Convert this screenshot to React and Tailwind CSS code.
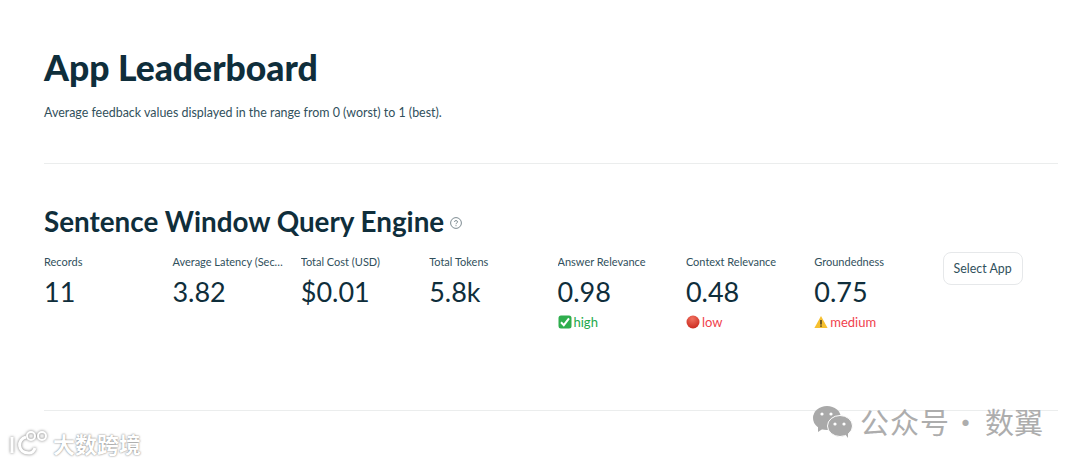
import React from "react";

const metrics = [
  { label: "Records", value: "11" },
  { label: "Average Latency (Seconds)", value: "3.82" },
  { label: "Total Cost (USD)", value: "$0.01" },
  { label: "Total Tokens", value: "5.8k" },
  { label: "Answer Relevance", value: "0.98", icon: "check", note: "high", noteClass: "text-[#21a84a]" },
  { label: "Context Relevance", value: "0.48", icon: "dot", note: "low", noteClass: "text-[#f0424c]" },
  { label: "Groundedness", value: "0.75", icon: "warn", note: "medium", noteClass: "text-[#f0424c]" },
];

const NoteIcon = ({ type }) => {
  if (type === "check") {
    return (
      <svg width="14" height="14" viewBox="0 0 14 14">
        <rect x="0.5" y="0.5" width="13" height="13" rx="2.5" fill="#2fae4e" />
        <path d="M3 7.2 L5.8 10.2 L11 3.4" fill="none" stroke="#fff" strokeWidth="2" />
      </svg>
    );
  }
  if (type === "dot") {
    return (
      <svg width="14" height="14" viewBox="0 0 14 14">
        <defs>
          <radialGradient id="redDot" cx="45%" cy="25%" r="80%">
            <stop offset="0%" stopColor="#f0705f" />
            <stop offset="100%" stopColor="#c9261b" />
          </radialGradient>
        </defs>
        <circle cx="7" cy="7" r="6.5" fill="url(#redDot)" />
      </svg>
    );
  }
  return (
    <svg width="14" height="14" viewBox="0 0 14 14">
      <path d="M7 1 L13.6 13 H0.4 Z" fill="#f6c030" strokeLinejoin="round" />
      <rect x="6.3" y="5" width="1.4" height="4.6" fill="#3a3320" />
      <rect x="6.3" y="10.4" width="1.4" height="1.4" fill="#3a3320" />
    </svg>
  );
};

const Metric = ({ label, value, icon, note, noteClass }) => (
  <div className="min-w-0">
    <div className="truncate pt-[2px] text-[11px] leading-[16px] text-[#31505c]">{label}</div>
    <div className="mt-[2px] text-[27px] leading-[40px] text-[#0f2e3b]">{value}</div>
    {note && (
      <div className={`mt-[1px] flex items-center gap-[2px] text-[13px] leading-[18px] ${noteClass}`}>
        <NoteIcon type={icon} />
        <span>{note}</span>
      </div>
    )}
  </div>
);

export default function App() {
  return (
    <div className="relative h-[464px] w-[1080px] overflow-hidden bg-white pl-[44px] pr-[22px] font-['Lato',sans-serif]">
      <h1 className="pt-[45px] text-[35.5px] font-black leading-[46px] text-[#0f2e3b]">App Leaderboard</h1>
      <p className="mt-[13px] text-[12.45px] leading-[18px] text-[#31505c]">
        Average feedback values displayed in the range from 0 (worst) to 1 (best).
      </p>
      <hr className="mt-[41px] border-[#ebeded]" />

      <div className="mt-[39px] flex items-center gap-[6px]">
        <h2 className="text-[27.8px] font-bold leading-[38px] text-[#0f2e3b]">Sentence Window Query Engine</h2>
        <svg width="12" height="12" viewBox="0 0 12 12" className="mt-[1px]" fill="none" stroke="#7d8b91">
          <circle cx="6" cy="6" r="5.4" />
          <path d="M4.4 4.8 C4.4 3.2 7.6 3.2 7.6 4.8 C7.6 6 6 5.8 6 7.2" />
          <path d="M6 8.2 V9.2" />
        </svg>
      </div>

      <div className="mt-[11px] grid w-[1011px] grid-cols-8 gap-4">
        {metrics.map((m) => (
          <Metric key={m.label} {...m} />
        ))}
        <div>
          <button className="h-[33px] w-[80px] rounded-[8px] border border-[#e6e8ea] bg-white pt-[1px] text-[12.4px] text-[#31505c]">
            Select App
          </button>
        </div>
      </div>

      <hr className="absolute left-[44px] right-[22px] top-[410px] border-[#ebeded]" />

      {/* watermarks */}
      <div className="absolute left-[9px] top-[429px] flex items-center gap-[2px]">
        <svg width="42" height="28" viewBox="0 0 42 28" fill="none" stroke="#fff" strokeWidth="2" style={{ filter: "drop-shadow(0 0 1.5px #777)" }}>
          <path d="M3 8 V24" strokeWidth="3" />
          <path d="M17 8 C8 10 8 24 20 24 C23 24 25 22 26 19" strokeWidth="3" />
          <circle cx="22" cy="7" r="4" />
          <circle cx="33" cy="7" r="4" />
        </svg>
        <span className="text-[22px] font-bold leading-[28px] text-white [text-shadow:0_0_2px_#666] font-['Noto_Sans_CJK_SC',sans-serif]">
          大数跨境
        </span>
      </div>
      <div className="absolute left-[812px] top-[404px] flex items-center font-['Noto_Sans_CJK_SC',sans-serif] text-[29px] leading-[34px] text-[#adadad]">
        <svg width="41" height="33" viewBox="0 0 41 33" fill="#a9a9a9" className="mr-[7px]">
          <ellipse cx="15" cy="13" rx="14" ry="12" />
          <path d="M6 21 L6 27 L12 23 Z" />
          <ellipse cx="28" cy="21" rx="12.5" ry="10.5" fill="#a9a9a9" stroke="#fff" strokeWidth="1" />
          <path d="M33 29 L36 33 L36 27 Z" />
          <circle cx="10" cy="9" r="1.6" fill="#fff" />
          <circle cx="19" cy="9" r="1.6" fill="#fff" />
          <circle cx="23" cy="19" r="1.6" fill="#fff" />
          <circle cx="32" cy="19" r="1.6" fill="#fff" />
        </svg>
        <span className="tracking-[1px]">公众号</span>
        <span className="ml-[1px] mr-[5px]">·</span>
        <span>数翼</span>
      </div>
    </div>
  );
}
